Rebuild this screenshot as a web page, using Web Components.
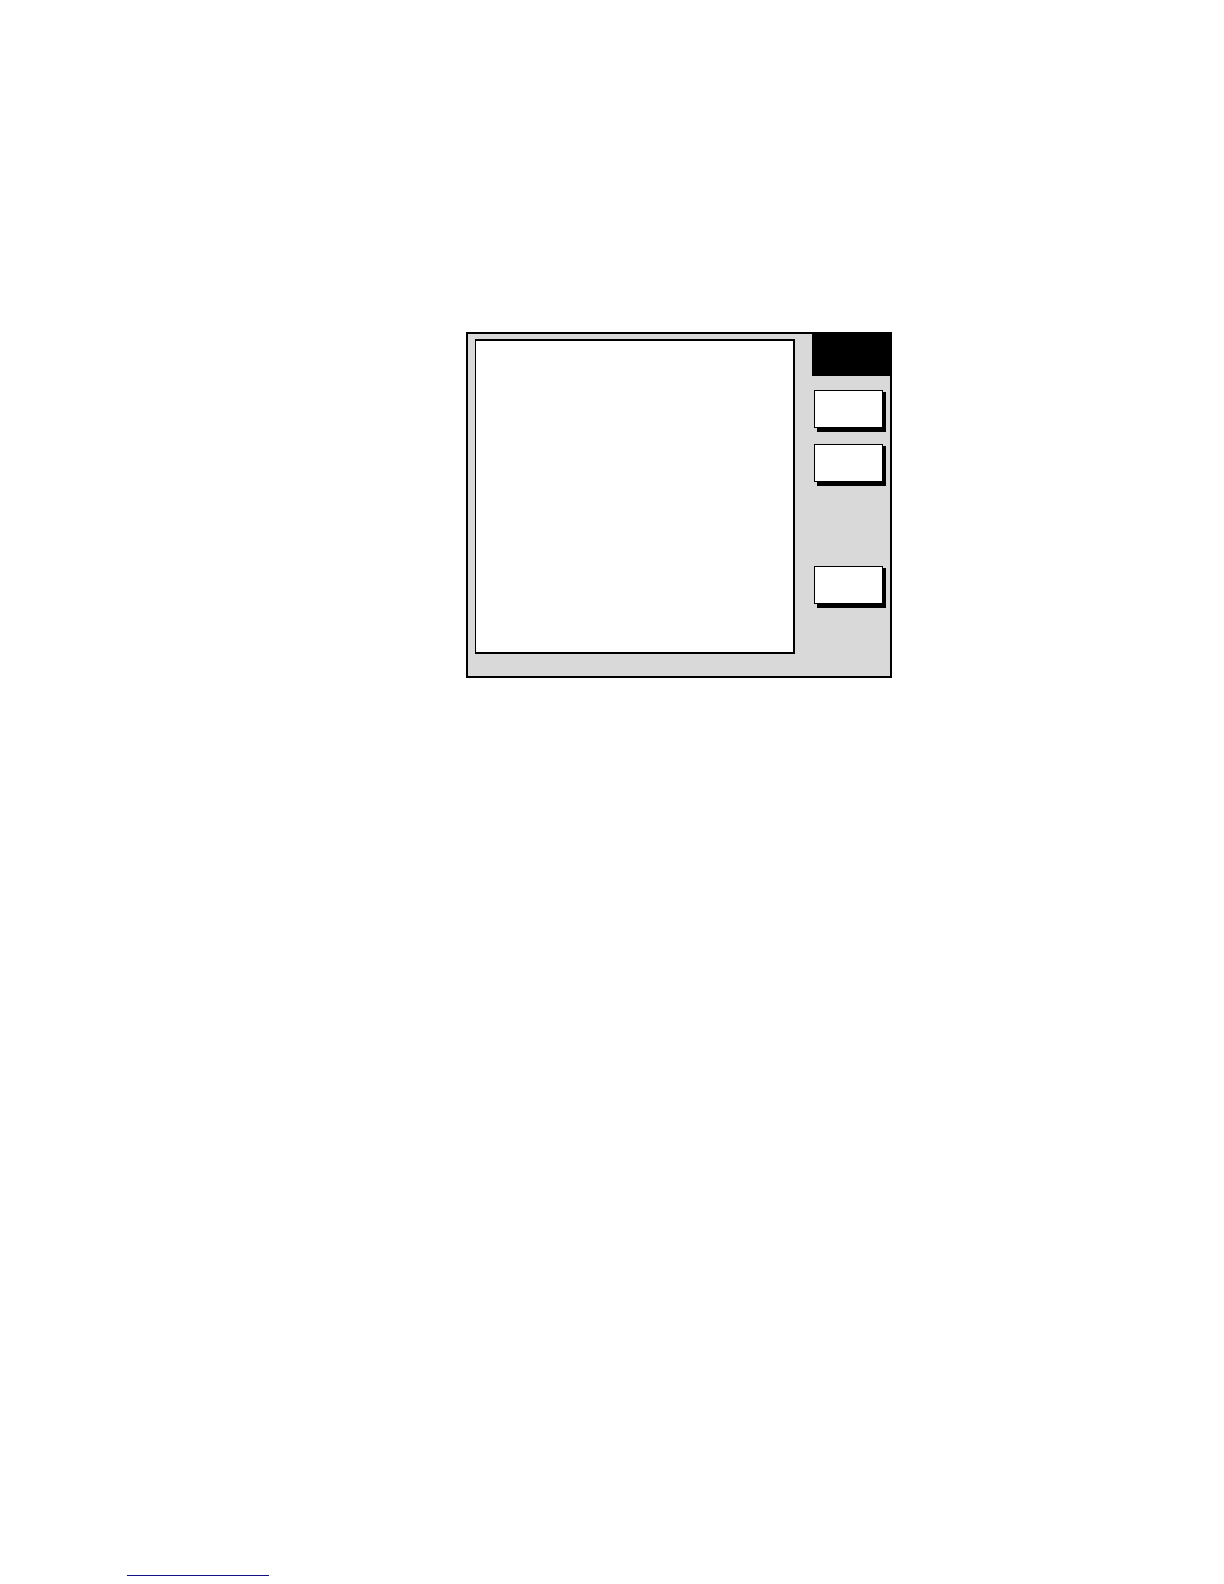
<!DOCTYPE html>
<html lang="en">
<head>
<meta charset="utf-8">
<title>Device panel</title>
<style>
    body {
        margin: 0;
        background: #fff;
        font-family: "Liberation Sans", Arial, sans-serif;
    }
</style>
</head>
<body>
<manual-page>
    <device-panel>
        <soft-key slot="keys" label="Key 1"></soft-key>
        <soft-key slot="keys" label="Key 2"></soft-key>
        <soft-key slot="exit" label="Key 3"></soft-key>
    </device-panel>
    <footer-link slot="footer" href="#" label="Footer link"></footer-link>
</manual-page>

<script>
// Page sheet: the figure in the middle column, the footer at the bottom
class ManualPage extends HTMLElement {
    constructor() {
        super();
        this.attachShadow({ mode: 'open' });
        this.shadowRoot.innerHTML = `
            <style>
                :host {
                    display: flex;
                    flex-direction: column;
                    justify-content: space-between;
                    box-sizing: border-box;
                    min-height: 100vh;
                    padding: 332px 0 8px;
                }

                main {
                    display: grid;
                    grid-template-columns: 466fr 426fr 332fr;
                }

                main ::slotted(*) {
                    grid-column: 2;
                }

                footer {
                    padding-left: 127px;
                }
            </style>
            <main><slot></slot></main>
            <footer><slot name="footer"></slot></footer>
        `;
    }
}

// Grey panel with a display area and a column of soft keys
class DevicePanel extends HTMLElement {
    constructor() {
        super();
        this.attachShadow({ mode: 'open' });
        this.shadowRoot.innerHTML = `
            <style>
                :host {
                    display: grid;
                    grid-template-columns: 1fr 78px;
                    gap: 17px;
                    border: 2px solid #000;
                    background: #d9d9d9;
                }

                .screen {
                    box-sizing: border-box;
                    min-height: 315px;
                    margin: 5px 0 22px 7px;
                    border: 2px solid #000;
                    border-left-width: 1px;
                    background: #fff;
                }

                .side {
                    display: flex;
                    flex-direction: column;
                }

                .title {
                    height: 42px;
                    background: #000;
                }

                .keys {
                    display: flex;
                    flex-direction: column;
                    flex: 1;
                    gap: 16px;
                    padding: 14px 7px 0 2px;
                }

                .exit {
                    padding: 0 7px 72px 2px;
                }
            </style>
            <section class="screen"></section>
            <div class="side">
                <header class="title"></header>
                <div class="keys"><slot name="keys"></slot></div>
                <div class="exit"><slot name="exit"></slot></div>
            </div>
        `;
    }
}

class SoftKey extends HTMLElement {
    constructor() {
        super();
        this.attachShadow({ mode: 'open' });
    }

    connectedCallback() {
        const label = this.getAttribute('label') || '';
        this.shadowRoot.innerHTML = `
            <style>
                :host {
                    display: block;
                }

                button {
                    display: block;
                    width: 100%;
                    height: 38px;
                    padding: 0;
                    border: 1px solid #000;
                    border-radius: 0;
                    background: #fff;
                    box-shadow: 3px 2px 0 #000, 3px 4px 0 #000;
                }
            </style>
            <button type="button" aria-label="${label}"></button>
        `;
    }
}

class FooterLink extends HTMLElement {
    constructor() {
        super();
        this.attachShadow({ mode: 'open' });
    }

    connectedCallback() {
        const href = this.getAttribute('href') || '#';
        const label = this.getAttribute('label') || '';
        this.shadowRoot.innerHTML = `
            <style>
                :host {
                    display: block;
                    width: 142px;
                }

                a {
                    display: block;
                    height: 16px;
                    border-bottom: 1px solid #101080;
                }
            </style>
            <a href="${href}" aria-label="${label}"></a>
        `;
    }
}

customElements.define('manual-page', ManualPage);
customElements.define('device-panel', DevicePanel);
customElements.define('soft-key', SoftKey);
customElements.define('footer-link', FooterLink);
</script>
</body>
</html>
